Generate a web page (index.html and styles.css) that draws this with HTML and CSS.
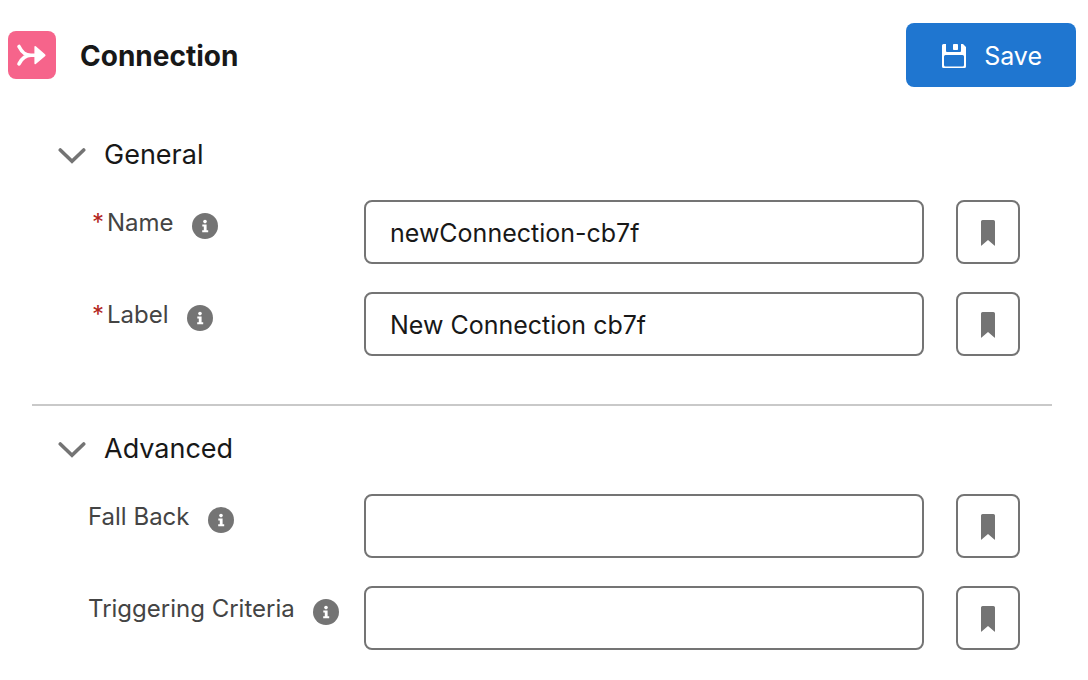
FILE: index.html
```html
<!DOCTYPE html>
<html lang="en">
<head>
  <meta charset="UTF-8">
  <title>Connection</title>
  <link rel="stylesheet" href="styles.css">
</head>
<body>
  <svg class="sprite" aria-hidden="true">
    <symbol id="chevron" viewBox="0 0 28 18"><path d="M2.300 4L14 15.200 25.700 4" fill="none" stroke="currentColor" stroke-width="3.600" stroke-linecap="round" stroke-linejoin="miter"/></symbol>
    <symbol id="info" viewBox="0 0 26 26"><circle cx="13" cy="13" r="13" fill="currentColor"/><circle cx="13" cy="8.600" r="1.800" fill="#fff"/><path d="M10.300 11.400h4.300v5.800h1.600v2h-6v-2h1.600v-3.800h-1.500z" fill="#fff"/></symbol>
    <symbol id="bookmark" viewBox="0 0 14 26"><path d="M1.600 0h10.800Q14 0 14 1.600V25.200q0 .8-.6.4L7 20 .6 25.600Q0 26 0 25.200V1.600Q0 0 1.600 0z" fill="currentColor"/></symbol>
  </svg>

  <header class="header">
    <svg class="logo" viewBox="0 0 48 48"><rect width="48" height="48" rx="8" fill="#f6648b"/><path d="M11 15.500C14 21.500 17 24.300 23 24.300h4M11 32.800c3-5.700 6-8.500 12-8.500" fill="none" stroke="#fff" stroke-width="3.600" stroke-linecap="round"/><path d="M27.800 15.300L37 23.200q1.300 1 0 2l-9.200 7.800q-1.400.9-1.400-.8V16.100q0-1.700 1.400-.8z" fill="#fff"/></svg>
    <h1>Connection</h1>
    <button class="save" type="submit" form="connectionForm">
      <svg class="save-icon" viewBox="0 0 24 24"><path d="M1.500 0H4v7q0 1 1 1h13q1 0 1-1V0h2L24 3v19.500q0 1.500-1.500 1.500h-21Q0 24 0 22.500v-21Q0 0 1.500 0zM3.500 11q-1.500 0-1.500 1.500v8.500q0 1.500 1.500 1.500h17q1.500 0 1.500-1.500v-8.500q0-1.500-1.500-1.500z" fill="#fff" fill-rule="evenodd"/><rect x="11" width="5" height="6" rx=".8" fill="#fff"/></svg>
      Save
    </button>
  </header>

  <form id="connectionForm">
    <section class="section">
      <h2><button class="toggle" type="button" aria-expanded="true"><svg class="chevron"><use href="#chevron"/></svg>General</button></h2>
      <div class="row">
        <div class="label"><span class="star">*</span><label for="name">Name</label><svg class="info"><use href="#info"/></svg></div>
        <input type="text" id="name" value="newConnection-cb7f" required>
        <button class="bookmark" type="button" aria-label="Bookmark name"><svg><use href="#bookmark"/></svg></button>
      </div>
      <div class="row">
        <div class="label"><span class="star">*</span><label for="label">Label</label><svg class="info"><use href="#info"/></svg></div>
        <input type="text" id="label" value="New Connection cb7f" required>
        <button class="bookmark" type="button" aria-label="Bookmark label"><svg><use href="#bookmark"/></svg></button>
      </div>
    </section>

    <section class="section">
      <h2><button class="toggle" type="button" aria-expanded="true"><svg class="chevron"><use href="#chevron"/></svg>Advanced</button></h2>
      <div class="row">
        <div class="label"><label for="fallBack">Fall Back</label><svg class="info"><use href="#info"/></svg></div>
        <input type="text" id="fallBack">
        <button class="bookmark" type="button" aria-label="Bookmark fall back"><svg><use href="#bookmark"/></svg></button>
      </div>
      <div class="row">
        <div class="label"><label for="criteria">Triggering Criteria</label><svg class="info"><use href="#info"/></svg></div>
        <input type="text" id="criteria">
        <button class="bookmark" type="button" aria-label="Bookmark triggering criteria"><svg><use href="#bookmark"/></svg></button>
      </div>
    </section>
  </form>
</body>
</html>
```
FILE: styles.css
```css
* { box-sizing: border-box; }
body { margin: 0; background: #fff; color: #181818; font-family: Inter, sans-serif; font-size: 25px; }
h1, h2 { margin: 0; }
button, input { font: inherit; color: inherit; }
button { cursor: pointer; }
.sprite { display: none; }

.header { display: flex; align-items: center; padding: 23px 12px 0 8px; }
.logo { width: 48px; height: 48px; margin-right: 24px; }
.header h1 { flex: 1; padding-top: 2px; font-size: 28px; font-weight: 700; line-height: 36px; }
.save { display: flex; align-items: center; gap: 18px; height: 64px; padding: 2px 34px 0 36px; border: 0; border-radius: 8px; background: #1f76d0; color: #fff; font-size: 25px; }
.save-icon { width: 24px; height: 24px; }

.section { margin: 0 36px 0 32px; padding: 25px 32px 48px 24px; }
.section:first-child { padding-top: 50px; }
.section + .section { border-top: 2px solid #c9c9c9; }
.section h2 { margin-bottom: 27px; font-size: 27px; font-weight: 400; line-height: 36px; }
.toggle { display: flex; align-items: center; gap: 18px; padding: 0 2px; border: 0; background: none; }
.chevron { width: 28px; height: 18px; color: #747474; }

.row { display: grid; grid-template-columns: 308px 1fr 64px; }
.row + .row { margin-top: 28px; }
.label { display: flex; align-items: flex-start; padding: 7px 0 0 32px; color: #444; font-size: 24px; line-height: 32px; white-space: nowrap; }
.star { margin: 0 3px 0 4px; color: #b3261e; }
.info { flex: none; width: 26px; height: 26px; margin: 6px 0 0 18px; color: #747474; }
.row input { min-width: 0; height: 64px; margin-right: 32px; padding: 2px 24px 0; border: 2px solid #747474; border-radius: 8px; background: #fff; }
.bookmark { display: flex; align-items: center; justify-content: center; width: 64px; height: 64px; padding: 2px 0 0; border: 2px solid #747474; border-radius: 8px; background: #fff; color: #747474; }
.bookmark svg { width: 14px; height: 26px; }
```
